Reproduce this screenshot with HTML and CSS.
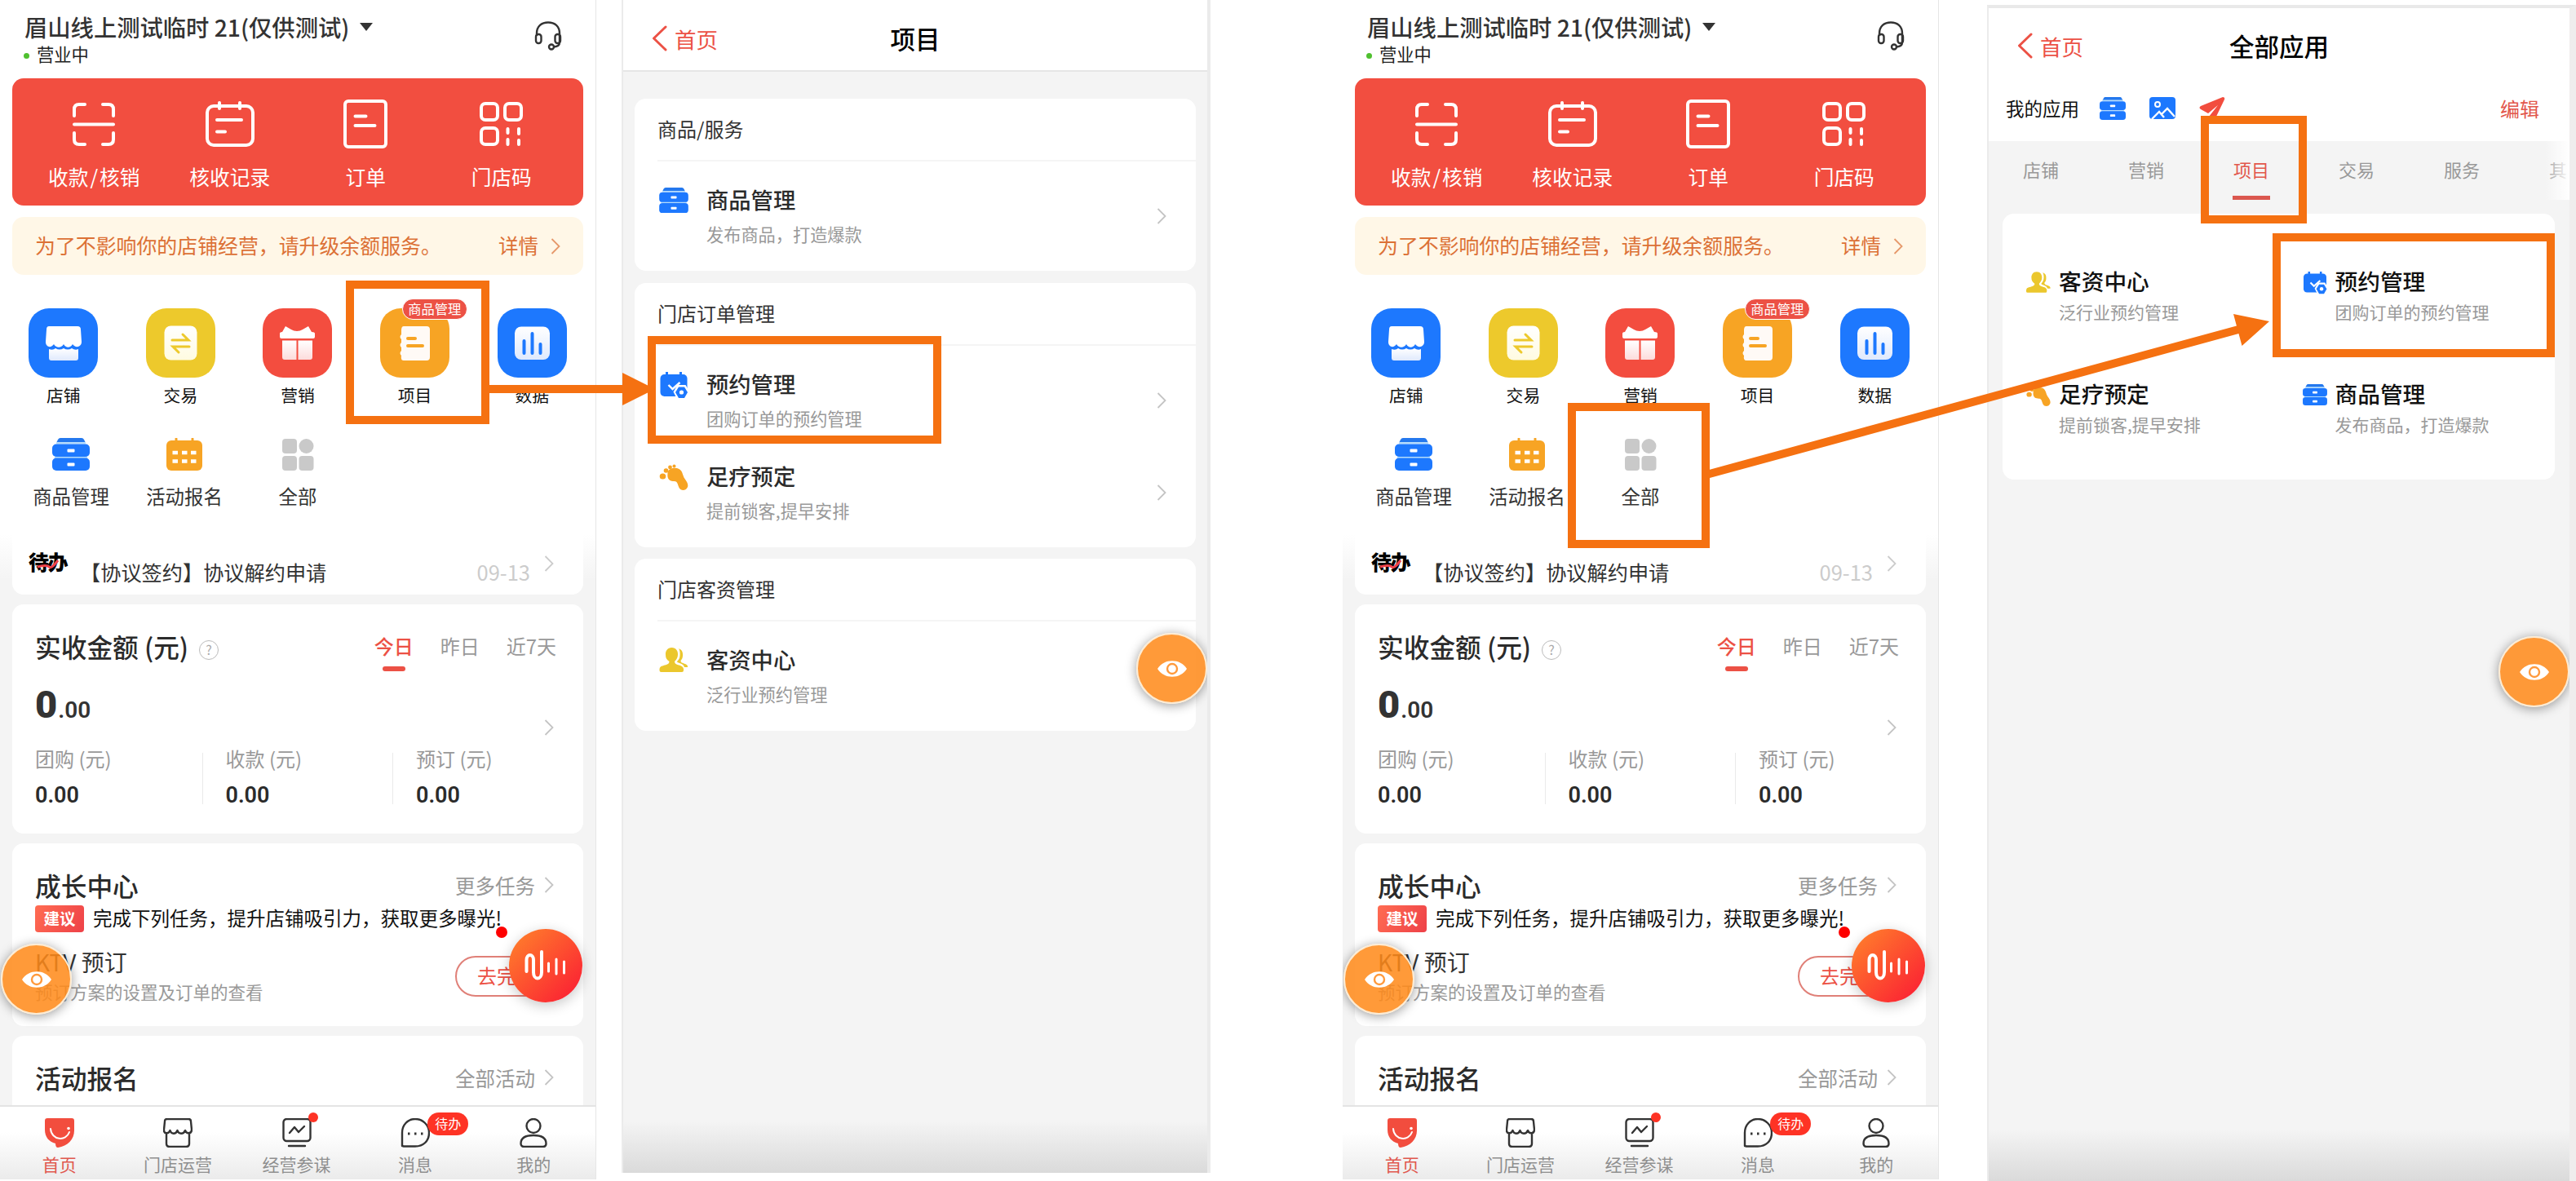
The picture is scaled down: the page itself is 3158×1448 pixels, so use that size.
FILE: index.html
```html
<!DOCTYPE html>
<html lang="zh-CN">
<head>
    <meta charset="UTF-8">
    <meta name="viewport" content="width=device-width, initial-scale=1.0">
    <title>预约管理入口</title>
    <link rel="stylesheet" href="styles.css">
</head>
<body>

<!-- Shared icons -->
<svg class="icon-defs" width="0" height="0">
    <defs>
        <linearGradient id="fadeBlue" x1="0" y1="0" x2="0" y2="1"><stop offset="0" stop-color="#fff"/><stop offset="1" stop-color="#dfe9fd"/></linearGradient>
        <linearGradient id="fadeRed" x1="0" y1="0" x2="0" y2="1"><stop offset="0" stop-color="#fff"/><stop offset="1" stop-color="#fddcdc"/></linearGradient>
        <linearGradient id="fadeYellow" x1="0" y1="0" x2="0" y2="1"><stop offset="0" stop-color="#fff"/><stop offset="1" stop-color="#fffbe0"/></linearGradient>
    </defs>
    <symbol id="chevron" viewBox="0 0 12 20"><path d="M1.5 1L10.5 10L1.5 19" fill="none" stroke="currentColor" stroke-width="1.8"/></symbol>
    <symbol id="back" viewBox="0 0 19 32"><path d="M17 2L2.500 16L17 30" fill="none" stroke="currentColor" stroke-width="3" stroke-linecap="round" stroke-linejoin="round"/></symbol>
    <symbol id="cabinet" viewBox="0 0 46 40">
        <path d="M10 0h26q2 0 3 2l2 4H5l2-4q1-2 3-2z" fill="#2478ee"/>
        <path d="M5 5h36v2.500H5zM3 22h40v3H3z" fill="#b5dcfb"/>
        <rect y="7.500" width="46" height="15.500" rx="5" fill="#1d78fe"/><rect y="24.500" width="46" height="15.500" rx="5" fill="#1d78fe"/>
        <rect x="18.500" y="13.500" width="9" height="4" rx="1" fill="#fff"/><rect x="18.500" y="30.500" width="9" height="4" rx="1" fill="#fff"/>
    </symbol>
    <symbol id="booking" viewBox="0 0 35 33">
        <rect x="1" y="3" width="33" height="27" rx="5" fill="#1d78fe"/>
        <path d="M9 0v5M26 0v5" stroke="#1d78fe" stroke-width="3"/>
        <path d="M11 16l5 5L25 13" fill="none" stroke="#fff" stroke-width="2.400"/>
        <path d="M22 16h10l5 8.500L32 34H22L17 24.500z" fill="#fff"/>
        <path d="M23.500 18.500h7l4 6.500-4 7h-7l-4-7z" fill="#1d78fe"/><circle cx="27" cy="25" r="2.600" fill="#fff"/>
    </symbol>
    <symbol id="foot" viewBox="0 0 35 32">
        <path d="M10 12C9 6 18 3 24 6c5 3 4 8 7 12 3 4 5 8 3 11-2 4-8 4-10 0-2-5-2-8-6-8-5 0-9-2-8-9z" fill="#f7a424"/>
        <ellipse cx="4" cy="15" rx="3.800" ry="3.500" fill="#f7a424"/><circle cx="8" cy="8" r="2.800" fill="#f7a424"/><circle cx="13" cy="4" r="2.400" fill="#f7a424"/><circle cx="18" cy="2.400" r="2" fill="#f7a424"/>
    </symbol>
    <symbol id="people" viewBox="0 0 35 30">
        <path d="M15 0c5 0 8 4 7.500 9-.3 4-2 6-4 8 0 3 3 4 7 5 3 1 4.500 3 4 6q0 2-2 2H2q-2 0-2-2c0-4 1-5 5-6 4-1 7-2 7-5-3-2-4.500-4-4.500-8C7 4 10 0 15 0z" fill="#ebc72d"/>
        <path d="M23 1c4 1 6 4 5.500 9-.2 3-1 4-2.500 6 0 2 1 2.500 4 3.500 3 1 5 2 4.500 4.500h-4c-1-3-3-4-6-5-2-.7-3-1-3-2 2-2 3.500-4 3.600-8 .2-3-.2-6-1.600-8z" fill="#ebc72d"/>
    </symbol>
    <symbol id="eye" viewBox="0 0 36 20">
        <path d="M0 10C8-3 28-3 36 10C28 23 8 23 0 10z" fill="#fff"/><circle cx="18" cy="10" r="6" fill="none" stroke="#ff9a3c" stroke-width="2.400"/>
    </symbol>
</svg>

<main class="board">

    <!-- Home screen -->
    <section class="phone home" id="home">
        <header class="shop">
            <div class="shop-info">
                <h1>眉山线上测试临时 21(仅供测试)<i class="caret"></i></h1>
                <p><i class="dot"></i>营业中</p>
            </div>
            <svg class="headset" width="34" height="36" viewBox="0 0 34 36" fill="none" stroke="#333" stroke-width="2.400">
                <path d="M3 18V15C3 6 9 1.500 17 1.500S31 6 31 15v11q0 5-7 5.500"/>
                <rect x="2" y="16" width="6.500" height="11" rx="3"/><rect x="25.500" y="16" width="6.500" height="11" rx="3"/><circle cx="21" cy="31.500" r="3"/>
            </svg>
        </header>

        <div class="quick">
            <div><svg width="54" height="60" viewBox="0 -3 54 60" fill="none" stroke="#fff" stroke-width="4" stroke-linecap="round"><path d="M3 17V9q0-6 6-6h7M38 3h7q6 0 6 6v8M3 38v8q0 6 6 6h7M38 52h7q6 0 6-6v-8M3 27.500h48"/></svg><span>收款<i class="slash">/</i>核销</span></div>
            <div><svg width="60" height="60" viewBox="0 -2 60 60" fill="none" stroke="#fff" stroke-width="4" stroke-linecap="round"><rect x="2" y="6" width="56" height="48" rx="8"/><path d="M17 2v7M42 2v7M14 23h30M14 37.500h10"/></svg><span>核收记录</span></div>
            <div><svg width="54" height="60" viewBox="0 0 54 60" fill="none" stroke="#fff" stroke-width="4" stroke-linecap="round"><rect x="2" y="2" width="50" height="56" rx="4"/><path d="M14.500 20.500h13M14.500 32h24"/></svg><span>订单</span></div>
            <div><svg width="54" height="60" viewBox="0 -3 54 60" fill="none" stroke="#fff" stroke-width="4" stroke-linecap="round"><rect x="2" y="2" width="20" height="20" rx="5"/><rect x="31" y="2" width="20" height="20" rx="5"/><rect x="2" y="32" width="20" height="20" rx="5"/><path d="M34.500 33v5M48 33v6M34.500 46v6M48 47v5"/></svg><span>门店码</span></div>
        </div>

        <div class="notice">
            <span>为了不影响你的店铺经营，请升级余额服务。</span>
            <span class="notice-link">详情<svg width="12" height="20"><use href="#chevron"/></svg></span>
        </div>

        <div class="tiles">
            <div><svg class="tile blue" viewBox="0 0 85 85"><path d="M25 22h35q4 0 4 4l1 15c0 7-8 8-11 3-3 5-8 5-11 0-3 5-9 5-12 0-3 5-10 4-10-3l1-15q0-4 3-4z" fill="#fff"/><path d="M25 50q5 2 8-1 5 3 10 0 5 3 10 0 4 3 8 1v11q0 3-3 3H28q-3 0-3-3z" fill="url(#fadeBlue)"/></svg>店铺</div>
            <div><svg class="tile yellow" viewBox="0 0 85 85"><rect x="22.500" y="21.500" width="40" height="42" rx="8" fill="url(#fadeYellow)"/><path d="M32 39h20L45 32M53 47H33l7 7" fill="none" stroke="#edc92c" stroke-width="3" stroke-linecap="round"/></svg>交易</div>
            <div><svg class="tile red" viewBox="0 0 85 85"><path d="M21 31q0-2 3-2l4-7 7 4q3 2 7 2t7-2l7-4 4 7q4 0 4 2v4q0 2-2 2H23q-2 0-2-2z" fill="#fff"/><path d="M24 39.500h17.500V63H27q-3 0-3-3zM43.500 39.500H61V60q0 3-3 3H43.500z" fill="url(#fadeRed)"/></svg>营销</div>
            <div><svg class="tile orange" viewBox="0 0 85 85"><path d="M29 22h28q4 0 4 4v34q0 4-4 4H29q-4 0-3-6q-3-3 0-6v-4q-3-3 0-6v-4q-3-3 0-6v-5q0-5 3-5z" fill="#fffaf6"/><path d="M34 37h9M34 46h18" stroke="#f7a424" stroke-width="4" stroke-linecap="round"/></svg>项目<b class="tile-badge">商品管理</b></div>
            <div><svg class="tile blue" viewBox="0 0 85 85"><rect x="21" y="22.500" width="43" height="40.500" rx="8" fill="url(#fadeBlue)"/><path d="M32.500 40v15M42.500 31v24M52.500 44v11" stroke="#1d78fe" stroke-width="4" stroke-linecap="round"/></svg>数据</div>
        </div>

        <div class="shortcuts">
            <div><svg width="46" height="40"><use href="#cabinet"/></svg>商品管理</div>
            <div><svg width="44" height="40" viewBox="0 0 44 40"><path d="M12 1v6M32 1v6" stroke="#f7a424" stroke-width="3" stroke-linecap="round"/><rect y="3" width="44" height="37" rx="6" fill="#f7a424"/><path d="M7.500 18h6.500M19 18h6.500M30 18h6.500M7.500 28.500h6.500M19 28.500h6.500M30 28.500h6.500" stroke="#fff" stroke-width="4.400"/></svg>活动报名</div>
            <div><svg width="40" height="40" viewBox="0 0 40 40" fill="#c9c9c9"><rect x="1" y="1" width="18" height="18" rx="4"/><circle cx="30.500" cy="10" r="9"/><rect x="1" y="22" width="18" height="18" rx="4"/><rect x="21.500" y="22" width="18" height="18" rx="4"/></svg>全部</div>
        </div>

        <div class="todo-area">
            <div class="todo">
                <b class="todo-logo">待办<svg width="28" height="12" viewBox="0 0 28 12"><path d="M1 9Q12 6 15 9T26 1" fill="none" stroke="#f0424a" stroke-width="3"/></svg></b>
                <span class="todo-text">【协议签约】协议解约申请</span>
                <span class="todo-date">09-13</span>
                <svg class="todo-arrow" width="12" height="20"><use href="#chevron"/></svg>
            </div>
        </div>

        <div class="feed">
            <div class="panel income">
                <div class="panel-head">
                    <h2>实收金额 (元)</h2><i class="help">?</i>
                    <div class="days"><span class="on">今日</span><span>昨日</span><span>近7天</span></div>
                </div>
                <div class="total"><span><b>0</b>.00</span><svg width="12" height="20"><use href="#chevron"/></svg></div>
                <div class="sums">
                    <div>团购 (元)<b>0.00</b></div>
                    <div>收款 (元)<b>0.00</b></div>
                    <div>预订 (元)<b>0.00</b></div>
                </div>
            </div>

            <div class="panel growth">
                <div class="panel-head"><h2>成长中心</h2><span class="more">更多任务<svg width="12" height="20"><use href="#chevron"/></svg></span></div>
                <p class="tip"><b>建议</b><span>完成下列任务，提升店铺吸引力，获取更多曝光!</span></p>
                <div class="task">
                    <div><h3>KTV 预订</h3><p>预订方案的设置及订单的查看</p></div>
                    <span class="go">去完成</span>
                </div>
            </div>

            <div class="panel signup">
                <div class="panel-head"><h2>活动报名</h2><span class="more">全部活动<svg width="12" height="20"><use href="#chevron"/></svg></span></div>
            </div>
        </div>

        <nav class="tabbar">
            <div class="on"><svg width="36" height="36" viewBox="0 0 36 36"><path d="M3 0h30q3 0 3 3v12c0 11-8 19-20 21q-3 0-3-5C5 29 0 23 0 14V3q0-3 3-3z" fill="#f24d3e"/><path d="M7 13c1 14 19 16 23 4" fill="none" stroke="#fff" stroke-width="2" stroke-linecap="round"/><circle cx="29" cy="12.500" r="1.800" fill="#fff"/></svg>首页</div>
            <div><svg width="36" height="36" viewBox="0 0 36 36" fill="none" stroke="#333" stroke-width="2.400" stroke-linejoin="round"><path d="M5 1h26q3 0 3 3l1 10c0 5-6 6-8 1-2 5-8 5-9.500 0-2 5-7.500 5-9 0-2 5-8 4-7.500-1L2 4q0-3 3-3zM4 19v12q0 4 4 4h20q4 0 4-4V19"/></svg>门店运营</div>
            <div><svg width="36" height="36" viewBox="0 0 36 36" fill="none" stroke="#333" stroke-width="2.400" stroke-linejoin="round" stroke-linecap="round"><rect x="1.500" y="1" width="33" height="27" rx="4"/><path d="M9 18l6-7 5 6 7-7M8 34h20"/></svg><i class="tab-dot"></i>经营参谋</div>
            <div><svg width="36" height="36" viewBox="0 0 36 36" fill="none" stroke="#333" stroke-width="2.400" stroke-linejoin="round"><path d="M2 34V18C2 8 9 1 18 1s17 7 17 17-7 16.500-17 16.500H4q-2 0-2-2z"/><path d="M9 19h2.500M17 19h2.500M25 19h2.500" stroke-width="3"/></svg><b class="tab-badge">待办</b>消息</div>
            <div><svg width="36" height="36" viewBox="0 0 36 36" fill="none" stroke="#333" stroke-width="2.400"><circle cx="18" cy="9.500" r="8.500"/><path d="M2.500 31c0-8 7-10 15.500-10s15.500 2 15.500 10q0 4-4 4h-23q-4 0-4-4z"/></svg>我的</div>
        </nav>

        <i class="red-dot"></i>
        <div class="voice"><svg width="52" height="38" viewBox="0 0 52 38" fill="none" stroke="#fff" stroke-linecap="round" stroke-width="4"><path d="M2.500 26V12c0-8 8.500-8 8.500 0v15c0 10 10 10 10 0V2"/><path d="M29.500 16v10M39 11v18M48.500 14v14" stroke-width="3"/></svg></div>
        <div class="eye eye-left"><svg width="36" height="20"><use href="#eye"/></svg></div>
    </section>

    <!-- Project list -->
    <section class="phone project">
        <header class="navbar"><a><svg width="19" height="32"><use href="#back"/></svg>首页</a><h1>项目</h1></header>
        <div class="groups">
            <div class="group">
                <h2>商品/服务</h2>
                <div class="entry"><svg class="entry-icon" width="36" height="31"><use href="#cabinet"/></svg><div><h3>商品管理</h3><p>发布商品，打造爆款</p></div><svg class="arrow" width="12" height="20"><use href="#chevron"/></svg></div>
            </div>
            <div class="group">
                <h2>门店订单管理</h2>
                <div class="entry"><svg class="entry-icon" width="36" height="33"><use href="#booking"/></svg><div><h3>预约管理</h3><p>团购订单的预约管理</p></div><svg class="arrow" width="12" height="20"><use href="#chevron"/></svg></div>
                <div class="entry"><svg class="entry-icon" width="36" height="32"><use href="#foot"/></svg><div><h3>足疗预定</h3><p>提前锁客,提早安排</p></div><svg class="arrow" width="12" height="20"><use href="#chevron"/></svg></div>
            </div>
            <div class="group">
                <h2>门店客资管理</h2>
                <div class="entry"><svg class="entry-icon" width="36" height="30"><use href="#people"/></svg><div><h3>客资中心</h3><p>泛行业预约管理</p></div></div>
            </div>
        </div>
        <div class="eye eye-project"><svg width="36" height="20"><use href="#eye"/></svg></div>
    </section>

    <!-- Second home screen, filled by the script below -->
    <section class="phone home" id="homeCopy"></section>

    <!-- All apps -->
    <section class="phone apps">
        <header class="navbar"><a><svg width="19" height="32"><use href="#back"/></svg>首页</a><h1>全部应用</h1></header>
        <div class="mine">
            <span>我的应用</span>
            <svg width="32" height="28"><use href="#cabinet"/></svg>
            <svg width="32" height="27" viewBox="0 0 32 27"><rect width="32" height="27" rx="4" fill="#1d78fe"/><circle cx="10" cy="9" r="3" fill="none" stroke="#fff" stroke-width="2"/><path d="M3 27l9-9 6 7M14 22l8-8 9 10" fill="none" stroke="#fff" stroke-width="2.400"/></svg>
            <svg width="32" height="28" viewBox="0 0 32 28"><path d="M29 0q3 0 2 3L19 28l-7-4 11-14-12 10-9-5q-3-2 0-4z" fill="#f24d3e"/></svg>
            <a>编辑</a>
        </div>
        <div class="cats"><span>店铺</span><span>营销</span><span class="on">项目</span><span>交易</span><span>服务</span><span>其</span></div>
        <div class="app-grid">
            <div class="app"><svg width="30" height="26"><use href="#people"/></svg><div><h3>客资中心</h3><p>泛行业预约管理</p></div></div>
            <div class="app"><svg width="30" height="28"><use href="#booking"/></svg><div><h3>预约管理</h3><p>团购订单的预约管理</p></div></div>
            <div class="app"><svg width="30" height="27"><use href="#foot"/></svg><div><h3>足疗预定</h3><p>提前锁客,提早安排</p></div></div>
            <div class="app"><svg width="30" height="26"><use href="#cabinet"/></svg><div><h3>商品管理</h3><p>发布商品，打造爆款</p></div></div>
        </div>
        <div class="eye eye-apps"><svg width="36" height="20"><use href="#eye"/></svg></div>
    </section>

    <!-- Boxes and arrows over the screens -->
    <svg class="marks" width="3158" height="1448" viewBox="0 0 3158 1448">
        <g fill="none" stroke="#f57111" stroke-width="10">
            <rect x="429" y="349" width="166" height="166"/>
            <rect x="799" y="417" width="350" height="122"/>
            <rect x="1927" y="499" width="164" height="168"/>
            <rect x="2703" y="147" width="120" height="122"/>
            <rect x="2791" y="291" width="336" height="142"/>
            <path d="M598 477H766M2092 582L2746 403.500"/>
        </g>
        <path d="M763 457L803 477L763 497zM2738 385L2782 394L2748.500 424z" fill="#f57111"/>
    </svg>
</main>

<script>
    // Both flows start from the same home screen
    document.getElementById('homeCopy').innerHTML = document.getElementById('home').innerHTML;
</script>

</body>
</html>
```
FILE: styles.css
```css
* { box-sizing: border-box; margin: 0; padding: 0; }
body { width: 3158px; height: 1448px; overflow: hidden; background-color: #fff; color: #333; font-family: "Noto Sans CJK SC", sans-serif; }
h1, h2, h3 { font-weight: 500; }
i { font-style: normal; }
svg { display: block; flex: none; }
.icon-defs { position: absolute; }
.board { display: flex; position: relative; height: 1448px; }
.phone { position: relative; flex: none; overflow: hidden; white-space: nowrap; }

/* Home */
.home { width: 731px; height: 1446px; border-right: 1px solid #e6e6e6; display: flex; flex-direction: column; }
.shop { display: flex; justify-content: space-between; height: 96px; padding: 16px 41px 0 30px; flex: none; }
.shop h1 { display: flex; align-items: center; font-size: 28.3px; line-height: 34px; }
.caret { margin-left: 13px; border: 8px solid transparent; border-top: 10px solid #333; border-bottom: 0; }
.shop p { display: flex; align-items: center; font-size: 21.3px; line-height: 32px; color: #222; }
.dot { width: 7px; height: 7px; margin: 4px 9px 0 -1px; border-radius: 50%; background-color: #4fc02f; }
.headset { margin-top: 10px; }

.quick { display: flex; height: 156px; flex: none; margin: 0 15px; padding: 26px 17px 0; border-radius: 14px; background-color: #f24e40; color: #fff; }
.quick div { flex: 1; display: flex; flex-direction: column; align-items: center; gap: 16px; font-size: 24.700px; line-height: 36px; }
.slash { margin: 0 2px; }

.notice { display: flex; align-items: center; justify-content: space-between; flex: none; height: 71px; margin: 14px 15px 0; padding: 0 28px 3px; border-radius: 14px; background-color: #fff7e7; color: #dc7136; font-size: 24.900px; }
.notice-link { display: flex; align-items: center; gap: 15px; font-size: 24.500px; }
.notice-link svg { margin-top: 3px; opacity: .7; }

.tiles { display: flex; width: 718px; flex: none; margin: 41px 0 0 6px; color: #111; }
.tiles div { position: relative; flex: 1; display: flex; flex-direction: column; align-items: center; gap: 6px; font-size: 20.800px; line-height: 30px; }
.tile { width: 85px; height: 85px; border-radius: 25px; }
.blue { background-color: #1d78fe; }
.yellow { background-color: #edc92c; }
.red { background-color: #f34d3f; }
.orange { background-color: #f7a424; }
.tile-badge { position: absolute; left: 56px; top: -12px; width: 80px; height: 26px; border: 1px solid #fff; border-radius: 13px; background-color: #ec5145; color: #fff; font-size: 16.300px; font-weight: 400; line-height: 22px; text-align: center; }

.shortcuts { display: flex; flex: none; margin: 38px 0 0 17.500px; }
.shortcuts div { width: 139px; display: flex; flex-direction: column; align-items: center; gap: 16px; font-size: 23.400px; line-height: 30px; }

.todo-area { flex: none; height: 74px; margin-top: 32px; padding: 0 15px; background: linear-gradient(#fff, #f4f4f4 75%); }
.todo { display: flex; height: 74px; padding: 0 36px 0 20px; border-radius: 0 0 14px 14px; background-color: #fff; font-size: 25.200px; }
.todo-logo { position: relative; width: 63px; font-size: 25px; font-weight: 900; line-height: 66px; letter-spacing: -1.500px; color: #000; }
.todo-logo svg { position: absolute; left: 10px; top: 31px; }
.todo-text, .todo-date { line-height: 92px; }
.todo-date { margin-left: auto; color: #ccc; font-size: 25.500px; }
.todo-arrow { margin: 26px 0 0 17px; color: #ccc; }

.feed { flex: 1; display: flex; flex-direction: column; gap: 12px; overflow: hidden; padding: 12px 15px 0; background-color: #f4f4f4; }
.panel { flex: none; padding: 0 36px 0 28px; border-radius: 14px; background-color: #fff; }
.panel-head { display: flex; align-items: center; height: 50px; }
.panel-head h2 { font-size: 31.700px; color: #2b2b2b; }
.panel svg { color: #c4c4c4; }
.income { height: 281px; padding-top: 26px; }
.help { width: 24px; height: 24px; margin: 10px 0 0 13px; border: 1.500px solid #bbb; border-radius: 50%; color: #aaa; font-size: 16px; line-height: 20px; text-align: center; }
.days { display: flex; gap: 33px; margin-left: auto; margin-right: -3px; font-size: 24px; line-height: 50px; color: #999; }
.days .on { position: relative; color: #ec5145; font-weight: 500; }
.days .on::after { content: ""; position: absolute; left: 10px; bottom: -6px; width: 28px; height: 6px; border-radius: 3px; background-color: #ec5145; }
.total { display: flex; align-items: center; justify-content: space-between; height: 72px; margin-top: 10px; font-family: Roboto, sans-serif; font-size: 28px; font-weight: 600; }
.total b { font-size: 47px; margin-right: 1px; }
.total svg { margin-top: 58px; }
.sums { display: flex; margin-right: -36px; padding-top: 13px; }
.sums div { position: relative; flex: none; width: 233.500px; height: 70px; font-size: 24px; line-height: 36px; color: #999; }
.sums div + div::before { content: ""; position: absolute; left: -29px; top: 11px; width: 1px; height: 63px; background-color: #eaeaea; }
.sums b { display: block; margin-top: 9px; font: 600 27px/36px Roboto, sans-serif; color: #2b2b2b; }

.growth { height: 224px; padding-top: 26px; }
.more { display: flex; align-items: center; gap: 11px; margin-left: auto; font-size: 24.500px; color: #999; }
.tip { display: flex; align-items: center; height: 33px; margin: 0; font-size: 23.500px; color: #111; }
.tip b { width: 60px; height: 33px; margin-right: 11px; border-radius: 4px; background: linear-gradient(120deg, #ff6c52, #ee4148); color: #fff; font-size: 19.500px; line-height: 31px; font-weight: 700; text-align: center; }
.tip span { padding-bottom: 3px; }
.task { display: flex; justify-content: space-between; margin-top: 17px; }
.task h3 { font-size: 28px; font-weight: 400; line-height: 38px; }
.task p { font-size: 21.500px; line-height: 36px; color: #999; }
.go { width: 121px; height: 50px; margin-top: 12px; border: 2px solid #e08078; border-radius: 25px; color: #ec5145; font-size: 24px; line-height: 44px; padding-left: 25px; }
.signup { height: 110px; padding-top: 26px; }

.tabbar { display: flex; flex: none; height: 91px; padding: 14px 3px 0 0; border-top: 2px solid #e4e4e4; background: linear-gradient(#fff 35%, #ebebeb); }
.tabbar div { position: relative; flex: 1; display: flex; flex-direction: column; align-items: center; gap: 3px; font-size: 21px; line-height: 34px; color: #8f8f8f; }
.tabbar .on { color: #e0584e; }
.tab-dot { position: absolute; left: 87px; top: -7px; width: 12px; height: 12px; border-radius: 50%; background-color: #fe3325; }
.tab-badge { position: absolute; left: 88px; top: -7px; width: 50px; height: 28px; border-radius: 14px; background-color: #fe3325; color: #fff; font-size: 16px; font-weight: 400; line-height: 26px; text-align: center; }

/* Floating buttons */
.red-dot { position: absolute; left: 608px; top: 1136px; width: 14px; height: 14px; border-radius: 50%; background-color: #fe0000; }
.voice { position: absolute; left: 624px; top: 1139px; width: 90px; height: 90px; display: flex; align-items: center; justify-content: center; border-radius: 50%; background: linear-gradient(135deg, #ff7a2c 10%, #fb2333 90%); box-shadow: 0 4px 16px rgba(0, 0, 0, .22); }
.eye { position: absolute; width: 87px; height: 87px; display: flex; align-items: center; justify-content: center; border: 2px solid #fdebd2; border-radius: 50%; background-color: rgba(255, 137, 24, .86); box-shadow: 0 2px 14px rgba(0, 0, 0, .4); }
.eye-left { left: 1px; top: 1157px; }
.eye-project { left: 629px; top: 776px; }
.eye-apps { left: 625px; top: 770px; }

/* Inner pages */
.navbar { position: relative; display: flex; align-items: center; justify-content: center; background-color: #fff; }
.navbar h1 { font-size: 30.500px; color: #000; }
.navbar a { position: absolute; left: 35px; display: flex; align-items: center; gap: 9px; font-size: 26.500px; color: #ec5145; }

.project { width: 722px; height: 1438px; margin-left: 31px; border-left: 2px solid #ebebeb; border-right: 4px solid #ebebeb; background: linear-gradient(#f4f4f4 1375px, #dadada); }
.project .navbar { height: 88px; padding-top: 8px; border-bottom: 2px solid #e6e6e6; }
.groups { display: flex; flex-direction: column; gap: 14.500px; padding: 33px 14px 0; }
.group { padding: 0 0 21px 28px; border-radius: 14px; background-color: #fff; }
.group h2 { height: 77px; border-bottom: 2px solid #f5f5f5; font-size: 24px; font-weight: 400; line-height: 73px; }
.entry { display: flex; height: 113px; padding-right: 36px; }
.entry-icon { margin: 32px 22px 0 2px; }
.entry h3 { padding-top: 27px; font-size: 27.300px; line-height: 38px; color: #2b2b2b; }
.entry p { padding-top: 7px; font-size: 21.200px; line-height: 34px; color: #999; }
.arrow { margin: 57px 0 0 auto; color: #c4c4c4; }

.apps { width: 722px; height: 1442px; margin: 6px 0 0 59px; border-top: 4px solid #e9e9e9; border-left: 2px solid #ebebeb; border-right: 8px solid #efeded; background: linear-gradient(#f4f4f4 1375px, #dadada); }
.apps .navbar { height: 95px; padding-bottom: 3px; }
#homeCopy { margin-left: 162px; }
.mine { display: flex; align-items: center; gap: 29px; height: 68px; padding: 0 37px 13px 21px; background-color: #fff; font-size: 22.500px; color: #111; }
.mine span { margin-right: -4px; padding-bottom: 1px; }
.mine a { margin-left: auto; font-size: 24px; color: #e2574c; }
.cats { position: relative; display: flex; height: 72px; overflow: hidden; font-size: 22px; line-height: 68px; color: #999; }
.cats span { position: relative; width: 129px; flex: none; padding-left: 42px; }
.cats .on { color: #e2574c; }
.cats .on::after { content: ""; position: absolute; left: 41px; bottom: 0; width: 46px; height: 5px; background-color: #db574f; }
.cats::after { content: ""; position: absolute; right: 0; top: 0; width: 30px; height: 72px; background: linear-gradient(90deg, rgba(255, 255, 255, 0), #fff); }
.app-grid { display: grid; grid-template-columns: 1fr 1fr; grid-auto-rows: 137.500px; width: 677px; height: 326px; margin: 17px 0 0 17px; padding-top: 61px; border-radius: 14px; background-color: #fff; }
.app { display: flex; gap: 10px; padding-left: 29px; }
.app svg { margin-top: 10px; }
.app h3 { font-size: 27.700px; line-height: 42px; color: #111; }
.app p { font-size: 21px; line-height: 35px; color: #999; }

.marks { position: absolute; left: 0; top: 0; }
```
